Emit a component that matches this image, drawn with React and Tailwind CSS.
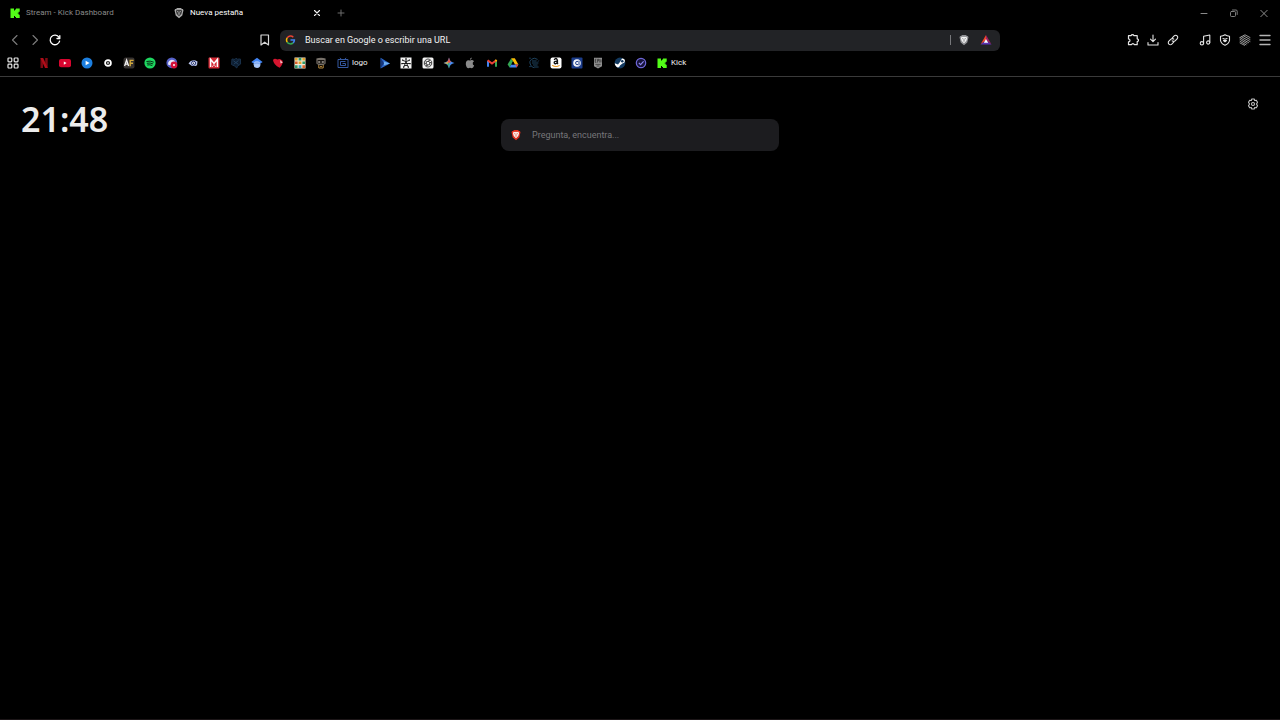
import { useState } from "react";

const KickIcon = () => (
  <svg viewBox="0 0 12 12" className="size-3 shrink-0">
    <path
      fill="#53fc18"
      d="M1.500 1.500h3.500v2h1v-1h1v-1h3.700v3.200h-1v1.100h-1v.8h1v1.100h1v3.300H7v-1H6v-1H5v2H1.500z"
    />
  </svg>
);

const LionIcon = ({ shield, face, line }) => (
  <svg viewBox="0 0 12 12" className="size-3 shrink-0">
    <path fill={shield} d="M4 1h4l.9.900h1l.6 1.400-.3 1.200-.9 3.900L6 11.200 2.700 8.400l-.9-3.900-.3-1.200.6-1.400h1z" />
    <path fill={face} d="M3.600 2.800l1.600.2.8-.2.8.2 1.600-.2.7 1.500L8.300 7 6 9.200 3.700 7l-.8-2.700z" />
    <path fill="none" stroke={line} strokeWidth=".6" d="M4 4.500l1.300.4M8 4.500l-1.300.4M6 4.700v1.800M5 7.300l1-.6 1 .6" />
  </svg>
);

// thin line icons of the toolbar
const LineIcon = ({ d, color = "#e4e4e4", width = 1.1, children }) => (
  <svg
    viewBox="0 0 12 12"
    className="size-3 shrink-0"
    fill="none"
    stroke={color}
    strokeWidth={width}
    strokeLinecap="round"
    strokeLinejoin="round"
  >
    {d && <path d={d} />}
    {children}
  </svg>
);

const IconButton = ({ label, children }) => (
  <button type="button" aria-label={label} className="flex shrink-0 items-center">
    {children}
  </button>
);

const firstLinks = [
  {
    name: "Netflix",
    icon: (
      <>
        <path fill="#7d0a13" d="M2.500 1h2.500v10H2.500zM7.200 1h2.500v10H7.200z" />
        <path fill="#b00d19" d="M2.500 1h2.700l4.500 10H7z" />
      </>
    ),
  },
  {
    name: "YouTube",
    icon: (
      <>
        <rect x="0" y="2" width="12" height="8.2" rx="2" fill="#d8052f" />
        <path fill="#fff" d="M4.800 4.500l2.800 1.600-2.800 1.600z" />
      </>
    ),
  },
  {
    name: "Video",
    icon: (
      <>
        <circle cx="6" cy="6" r="5.5" fill="#1c7fe0" />
        <path fill="#fff" d="M4.600 3.800L8.600 6 4.600 8.200z" />
      </>
    ),
  },
  {
    name: "Disco",
    icon: (
      <>
        <circle cx="6" cy="6" r="2.9" fill="none" stroke="#fff" strokeWidth="1.8" />
        <path stroke="#fff" strokeWidth="1.2" d="M6 4.8v2.4" />
      </>
    ),
  },
  {
    name: "AnimeFLV",
    icon: (
      <>
        <rect x=".5" y=".5" width="11" height="11" rx="2" fill="#35312f" />
        <path fill="none" stroke="#f2f2f2" strokeWidth="1.300" d="M1.600 9l2-6 2 6M2.300 7.200h2.600" />
        <path fill="none" stroke="#d2a93c" strokeWidth="1.400" d="M7.200 9.200V3.400h3.400M7.200 6.200h2.800" />
      </>
    ),
  },
  {
    name: "Spotify",
    icon: (
      <>
        <circle cx="6" cy="6" r="5.600" fill="#1ed760" />
        <path
          fill="none"
          stroke="#062b13"
          strokeLinecap="round"
          d="M2.800 4.400q3.400-1 6.600.6M3.200 6.200q3-.8 5.600.6M3.600 7.900q2.400-.6 4.400.5"
        />
      </>
    ),
  },
  {
    name: "Chat",
    icon: (
      <>
        <circle cx="5.800" cy="5.800" r="5.400" fill="#5661c9" />
        <path fill="#e6e6fb" d="M2 7.400q0-3.900 3.900-4.600 2.600 0 3.600 2.400L6.200 5l-1.600 3.400z" />
        <circle cx="8" cy="8" r="3.400" fill="#d3123b" />
        <circle cx="8" cy="8" r="1" fill="#fff" />
      </>
    ),
  },
  {
    name: "Ojo",
    icon: (
      <>
        <path fill="#b9c4ea" d="M1.500 6.400Q4.600 1.600 10.500 4.400L10 8.200Q6 10.600 1.500 6.400z" />
        <circle cx="6.600" cy="6.200" r="2" fill="#fff" stroke="#1c2b6b" />
        <circle cx="6.600" cy="6.200" r=".7" fill="#1c2b6b" />
      </>
    ),
  },
  {
    name: "Manga",
    icon: (
      <>
        <rect x=".5" y=".5" width="11" height="11" rx="1" fill="#d52a36" />
        <path fill="none" stroke="#fff" strokeWidth="1.500" d="M2.600 10V2.400L6 6.400l3.400-4V10" />
        <path stroke="#f7bdc0" d="M4.200 10L6 7.400 7.800 10" fill="none" />
      </>
    ),
  },
  {
    name: "Foro",
    icon: (
      <>
        <path
          fill="#0d1d30"
          stroke="#1a324c"
          d="M2 2l3 .4L6 1.200l1.200 1L10.400 2l.2 5L7.400 9.200 6.800 11 4.600 9 1.600 7.600z"
        />
        <path fill="none" stroke="#22405f" d="M3.400 3.800l5 3.600M8.400 3.600L3.800 7.200" />
      </>
    ),
  },
  {
    name: "Google Académico",
    icon: (
      <>
        <path fill="#4285f4" d="M6 .8L11.600 5 9 6.800H3L.4 5z" />
        <circle cx="6" cy="7.600" r="3.400" fill="#a9c7f8" />
        <path fill="#7faaf2" d="M3 6.200q3-2 6 0l-.3 1.200q-2.700-1.400-5.400 0z" />
      </>
    ),
  },
  {
    name: "Corazón",
    icon: (
      <>
        <path fill="#d5152f" d="M1 3Q2.400.8 5.400 2.600 8 1 10.600 3.800 11.400 7 7.600 10.800 1.600 8 1 3z" />
        <path fill="#f3c9cc" d="M8 3l2.800 2.600-2.200 1z" />
      </>
    ),
  },
  {
    name: "Mosaico",
    icon: (
      <>
        <rect x=".5" y=".5" width="11" height="11" fill="#f1ead2" />
        <path fill="#e3a32a" d="M1 1h2.600v2.400H1zM4.600 4.600h2.800V7H4.600zM8.400 1H11v2.400H8.400z" />
        <path fill="#2e9a68" d="M4.600 1h2.800v2.400H4.600zM1 8.200h2.600V11H1zM8.400 4.600H11V7H8.400z" />
        <path fill="#d9622b" d="M1 4.600h2.600V7H1zM8.400 8.200H11V11H8.400z" />
        <path fill="#39a9c4" d="M4.600 8.200h2.800V11H4.600z" />
      </>
    ),
  },
  {
    name: "Personaje",
    icon: (
      <>
        <path fill="#77716a" d="M1.400 1.600Q6-.2 10.600 1.600v5L8.600 8H3.400l-2-1.400z" />
        <path fill="#17130f" d="M2.600 3h6.800v3.600H2.600z" />
        <path fill="#e9e4dc" d="M3.200 4.400h2v1h-2zM6.800 4.400h2v1h-2z" />
        <path fill="none" stroke="#b98a3c" d="M3.800 8v3h4.400V8M5 9.400h2" />
      </>
    ),
  },
];

const secondLinks = [
  {
    name: "Play",
    icon: (
      <>
        <path fill="#2c67c9" d="M1.600.8L11 6.400 1.600 11.400z" />
        <path fill="#6fb0f2" d="M5 4.600l6 1.800L5 8.200z" />
        <path fill="#16357a" d="M1.600.8L5 6.200l-3.400 5.200z" />
      </>
    ),
  },
  {
    name: "Red",
    icon: (
      <>
        <rect x=".5" y=".5" width="11" height="11" fill="#f4f4f4" />
        <g fill="none" stroke="#111" strokeWidth=".9">
          <path d="M6 1.500v3M6 4.500L3 3.500M6 4.500l3-1M6 4.500L3.800 10M6 4.500L8.200 10M2 6.500h8M4.500 8.500h3" />
        </g>
        <path
          fill="#111"
          d="M5.400 1.200h1.200v1.200H5.400zM2 2.600h1.200v1.200H2zM8.800 2.600H10v1.200H8.800zM1.300 6h1.200v1.200H1.300zM9.500 6h1.200v1.200H9.500zM3 9.500h1.300v1.200H3zM7.700 9.500H9v1.200H7.700z"
        />
      </>
    ),
  },
  {
    name: "ChatGPT",
    icon: (
      <>
        <rect x=".5" y=".5" width="11" height="11" rx="1.500" fill="#f4f4f4" />
        <g fill="none" stroke="#222" strokeWidth=".8">
          <path d="M6 2q2 0 2.400 1.200Q10.200 4 9.700 6q.5 2-1.300 2.800Q8 10 6 10T3.600 8.800Q1.800 8 2.300 6q-.5-2 1.300-2.800Q4 2 6 2z" />
          <path d="M6 4.200l1.700 1v2L6 8.100l-1.700-.9v-2zM8.400 3.200L6 4.200M9.700 6L7.700 5.200M8.400 8.800l-.7-1.600M3.600 8.800L6 8.100M2.300 6l2 1.200M3.600 3.200l.7 2" />
        </g>
      </>
    ),
  },
  {
    name: "Gemini",
    icon: (
      <>
        <path fill="#4a8df0" d="M6 .5Q6.800 5.200 11.500 6 6.800 6.800 6 11.500 5.200 6.800.5 6 5.200 5.200 6 .5z" />
        <path fill="#e5533d" d="M6 .5q.4 3.600 2 4.600L6 6 4 5.100Q5.600 4.100 6 .5z" />
        <path fill="#e2b53b" d="M.5 6q3-.4 3.700-.9L6 6l-1.800.9Q3.500 6.400.5 6z" />
        <path fill="#3fae6c" d="M6 11.500Q5.600 8 4.200 6.900L6 6l.5 2z" />
      </>
    ),
  },
  {
    name: "Apple",
    icon: (
      <path
        fill="#8b8b8b"
        d="M6 3.600Q8.400 2.400 10 4.200 8.200 5.400 8.800 7.200q.3.900 1.400 1.400Q9.200 11.200 7.800 11.200L6 10.800l-1.600.4Q2.400 11.200 1.800 7.200 1.800 3.400 4.400 3.200zM5.900 3Q6 1 7.800.6 7.900 2.600 5.900 3z"
      />
    ),
  },
  {
    name: "Gmail",
    icon: (
      <g fill="none" strokeWidth="2">
        <path stroke="#4285f4" d="M2 4v5.800" />
        <path stroke="#34a853" d="M10 4v5.800" />
        <path stroke="#ea4335" d="M1.600 3.200L6 6.600l4.400-3.400" />
        <path stroke="#fbbc04" d="M9.400 4l1.200-1" />
      </g>
    ),
  },
  {
    name: "Drive",
    icon: (
      <>
        <path fill="#34a853" d="M4.200 1.200L6 4.200 2.600 10.400.6 7.600z" />
        <path fill="#fbbc04" d="M4.200 1.200h3.600l3.600 6.400H8z" />
        <path fill="#4285f4" d="M4.200 7.600h7.200l-1.800 2.800h-7z" />
        <path fill="#ea4335" d="M8.400 7.600h3l-1.800 2.800z" />
        <path fill="#000" d="M6 4.600l1.600 2.800H4.400z" />
      </>
    ),
  },
  {
    name: "Circuito",
    icon: (
      <g fill="none" stroke="#1f4460">
        <path d="M9.600 2.400Q6 0 3.400 2.400T2.200 7q.6 3 4 3.800M4 4h4.600M4 6h6.400M5 8h4.600M6 10h4.600" />
        <path stroke="#16324a" d="M1 1.200h2M9.600 4.600l1.600-1M1 9.600h2.600" />
      </g>
    ),
  },
  {
    name: "Amazon",
    icon: (
      <>
        <rect x=".5" y=".5" width="11" height="11" rx="2" fill="#fff" />
        <path
          fill="none"
          stroke="#111"
          strokeWidth="1.400"
          d="M4.200 3Q6 0 7.400 3.200V6.400l.6.600M7.300 4.200Q4 4 4.200 5.800 5.400 7.800 7.300 5.400"
        />
        <path fill="none" stroke="#f19a1a" strokeWidth="1.100" d="M2.200 8.200q3.800 2.600 7.400.2" />
      </>
    ),
  },
  {
    name: "Correo",
    icon: (
      <>
        <rect x=".5" y=".5" width="11" height="11" rx="1" fill="#1b3c8a" />
        <circle cx="6" cy="6" r="3.800" fill="#f2f5fc" />
        <path fill="none" stroke="#1b3c8a" d="M7 4.400Q4.600 3.800 4.600 6T7 7.600M8 3.600v4.800" />
      </>
    ),
  },
  {
    name: "Epic Games",
    icon: (
      <>
        <path fill="#8f8f8f" d="M2 .8h8v8.400L6 11.400 2 9.200z" />
        <path
          fill="none"
          stroke="#1c1c1c"
          strokeWidth=".6"
          d="M4.400 2.200H3.200v3.200h1.200M3.200 3.800h1M5.600 5.600V2.200h1v1.600h-1M7.800 2v3.600M9 2.400v3M3.400 7.400h5.200M4.600 9h2.800"
        />
      </>
    ),
  },
  {
    name: "Steam",
    icon: (
      <>
        <circle cx="6" cy="6" r="5.400" fill="#12395f" />
        <path fill="#fff" d="M.8 6.200L4 7.600 6 5l2-3.400q2.600-.2 3 2.200-.2 2.400-2.600 2.800L6 8.600Q5.600 10.600 3.800 10.400 2 9.800 1 7.800z" />
        <circle cx="8.300" cy="4.200" r="1.300" fill="#12395f" />
      </>
    ),
  },
  {
    name: "Verificado",
    icon: (
      <>
        <circle cx="6" cy="6" r="4.700" fill="#17143a" stroke="#6f67d8" strokeWidth="1.200" />
        <path fill="none" stroke="#8f88ee" strokeWidth="1.200" d="M3.800 5.800l1.800 1.800 3-3.200" />
      </>
    ),
  },
];

const Bookmark = ({ name, icon }) => (
  <a href="#" aria-label={name} className="flex">
    <svg viewBox="0 0 12 12" className="size-3">
      {icon}
    </svg>
  </a>
);

function TitleBar() {
  return (
    <div className="flex h-[26px] items-center justify-between pr-[10px] pl-[9px]">
      <div className="flex items-center">
        <button type="button" className="flex w-[164px] items-center gap-[5px] text-[#8a8a8a]">
          <KickIcon />
          <span>Stream - Kick Dashboard</span>
        </button>
        <button type="button" className="flex w-[138px] items-center gap-[5px] text-white">
          <LionIcon shield="#a9a9a9" face="#3b3b3b" line="#dedede" />
          <span>Nueva pestaña</span>
        </button>
        <div className="flex items-center gap-3">
          <IconButton label="Cerrar pestaña">
            <LineIcon d="M3.500 3.500l5 5M8.500 3.500l-5 5" color="#f2f2f2" />
          </IconButton>
          <IconButton label="Nueva pestaña">
            <LineIcon d="M6 3v6M3 6h6" color="#6c6c6c" width={1} />
          </IconButton>
        </div>
      </div>
      <div className="flex items-center gap-[18px]">
        <IconButton label="Minimizar">
          <LineIcon d="M3 6.500h6" color="#8a8a8a" width={1} />
        </IconButton>
        <IconButton label="Restaurar">
          <LineIcon color="#8a8a8a" width={0.9}>
            <rect x="2.500" y="4.500" width="5" height="5" rx="1" />
            <path d="M4.500 3h3.500q1.200 0 1.200 1.200V7.500" />
          </LineIcon>
        </IconButton>
        <IconButton label="Cerrar">
          <LineIcon d="M2.800 3.300l6.400 6.400M9.200 3.300L2.800 9.700" color="#9a9a9a" width={0.9} />
        </IconButton>
      </div>
    </div>
  );
}

function Toolbar() {
  const [url, setUrl] = useState("");

  return (
    <div className="grid h-7 grid-cols-[1fr_720px_1fr] items-center">
      <div className="flex items-center justify-between px-[9px]">
        <div className="flex items-center gap-2">
          <IconButton label="Atrás">
            <LineIcon d="M8 1.500L3.500 6 8 10.500" color="#7c7c7c" />
          </IconButton>
          <IconButton label="Adelante">
            <LineIcon d="M4 1.500L8.500 6 4 10.500" color="#7c7c7c" />
          </IconButton>
          <IconButton label="Recargar">
            <LineIcon width={1.3} color="#fff">
              <path d="M10.600 7.200A4.800 4.800 0 1 1 10 3.300" />
              <path d="M10.800 1.600v2.900H8" />
            </LineIcon>
          </IconButton>
        </div>
        <IconButton label="Guardar en marcadores">
          <LineIcon d="M2 1h7.500v10L5.700 8.200 2 11z" color="#d8d8d8" width={1.2} />
        </IconButton>
      </div>

      <div className="flex h-[21px] items-center rounded-md bg-[#222326] pr-2 pl-[5px]">
        <svg viewBox="0 0 12 12" className="size-3 shrink-0" fill="none" strokeWidth="1.500">
          <path stroke="#ea4335" d="M2.200 3.900A3.900 3.900 0 0 1 8.300 3.200" />
          <path stroke="#fbbc04" d="M2.200 8.100a3.900 3.900 0 0 1 0-4.200" />
          <path stroke="#34a853" d="M8.100 8.900A3.900 3.900 0 0 1 2.200 8.100" />
          <path stroke="#4285f4" d="M5.500 6h3.900A3.900 3.900 0 0 1 8.100 8.900" />
        </svg>
        <input
          type="text"
          aria-label="Barra de direcciones"
          placeholder="Buscar en Google o escribir una URL"
          value={url}
          onChange={(e) => setUrl(e.target.value)}
          className="ml-2 min-w-0 flex-1 bg-transparent text-[9px] text-white outline-none placeholder:text-[#f2f2f2]"
        />
        <span className="mr-[7px] h-2.5 w-px bg-[#77787b]" />
        <div className="flex items-center gap-[10px]">
          <IconButton label="Brave Shields">
            <LionIcon shield="#8f9094" face="#f4f4f4" line="#6d6d70" />
          </IconButton>
          <IconButton label="Brave Rewards">
            <svg viewBox="0 0 12 12" className="size-3">
              <path fill="#f0452a" d="M6 1L.5 10.500 6 6z" />
              <path fill="#9e1f63" d="M6 1l5.500 9.500L6 6z" />
              <path fill="#5b33b8" d="M.5 10.500h11L6 6.500z" />
              <path fill="#fff" d="M6 5l2.200 3.800H3.800z" />
            </svg>
          </IconButton>
        </div>
      </div>

      <div className="flex items-center justify-end gap-5 pr-[9px]">
        <div className="flex items-center gap-2">
          <IconButton label="Extensiones">
            <LineIcon
              width={1.2}
              d="M1.500 1.700h2.700q.2-1 1.300-1t1.300 1h3.400v3.100q1.300.2 1.300 1.400t-1.300 1.400v3.100H7.300Q7 9.600 5.900 9.600t-1.300 1.100H1.500V7.900q1.500-.2 1.500-1.500T1.500 4.900z"
            />
          </IconButton>
          <IconButton label="Descargas">
            <LineIcon d="M6 1v6.500M3.500 5.200L6 7.700l2.500-2.500M1 8.500V11h10V8.500" />
          </IconButton>
          <IconButton label="Copiar enlace">
            <LineIcon>
              <path d="M5.300 3.800l1.900-1.900a2 2 0 0 1 2.900 2.900L8.100 6.800a2 2 0 0 1-2.900 0" />
              <path d="M6.700 8.200L4.800 10.100a2 2 0 0 1-2.900-2.900L3.900 5.200a2 2 0 0 1 2.900 0" />
            </LineIcon>
          </IconButton>
        </div>
        <div className="flex items-center gap-2">
          <IconButton label="Música">
            <LineIcon>
              <path d="M4.600 9.200V2.200L10.800 1v7.200" />
              <circle cx="2.900" cy="9.300" r="1.700" />
              <circle cx="9.200" cy="8.500" r="1.600" />
            </LineIcon>
          </IconButton>
          <IconButton label="VPN">
            <LineIcon>
              <path d="M1.500 2.200Q4 2 6 .8 8 2 10.500 2.200v4.300Q10 9.600 6 11.300 2 9.600 1.500 6.500z" />
              <path d="M4 4.500l2 .7 2-.7M4.500 6.500L6 7.700l1.500-1.200z" />
            </LineIcon>
          </IconButton>
          <IconButton label="Leo">
            <LineIcon color="#a8a8a8" width={0.9}>
              <path d="M1 3.500L6 .8l5 2.700M1 5.400L8 9.500M1 7.300l6 3.400M2.600 2.800L11 7.500M4.400 1.800L11 5.500M1 9L5.600 11.300M1 3.700l8.600 5" />
            </LineIcon>
          </IconButton>
          <IconButton label="Menú">
            <LineIcon d="M1 1.500h10M1 6h10M1 10.500h10" color="#b4b4b4" width={1.4} />
          </IconButton>
        </div>
      </div>
    </div>
  );
}

function BookmarksBar() {
  return (
    <nav className="flex h-[23px] items-center border-b border-[#3a3a3a] pb-1 pl-[7px]">
      <IconButton label="Todos los marcadores">
        <LineIcon color="#e8e8e8" width={1.2}>
          <rect x="1" y="1" width="3.800" height="3.800" rx=".8" />
          <rect x="7.200" y="1" width="3.800" height="3.800" rx=".8" />
          <rect x="1" y="7.200" width="3.800" height="3.800" rx=".8" />
          <rect x="7.200" y="7.200" width="3.800" height="3.800" rx=".8" />
        </LineIcon>
      </IconButton>
      <div className="ml-[19px] flex w-[289px] justify-between">
        {firstLinks.map((link) => (
          <Bookmark key={link.name} {...link} />
        ))}
      </div>
      <a href="#" className="ml-[10px] flex w-[42px] items-center gap-[3px] text-[#f2f2f2]">
        <svg viewBox="0 0 12 12" className="size-3 shrink-0" fill="none" stroke="#3558a0">
          <path d="M4 2L3 .8M8 2L9 .8M1 2.500h10v8H1zM8.500 4.500h-5v4h5V6.500h-3" />
        </svg>
        <span>logo</span>
      </a>
      <div className="flex w-[268px] justify-between">
        {secondLinks.map((link) => (
          <Bookmark key={link.name} {...link} />
        ))}
      </div>
      <a href="#" className="ml-[9px] flex items-center gap-[3px] text-[#f2f2f2]">
        <KickIcon />
        <span>Kick</span>
      </a>
    </nav>
  );
}

export default function App() {
  const [query, setQuery] = useState("");

  return (
    <div className="flex min-h-screen flex-col border-b border-[#1c1618] bg-black font-[Roboto,'Noto_Sans',sans-serif] text-[8px] leading-3 text-white">
      <header>
        <TitleBar />
        <Toolbar />
        <BookmarksBar />
      </header>

      <main className="grid grid-cols-[1fr_278px_1fr] items-start pt-[21px]">
        <time className="pl-[21px] font-['Noto_Sans',sans-serif] text-[34px] leading-[42px] font-semibold text-[#ececec]">
          21:48
        </time>
        <div className="mt-[21px] flex h-8 items-center rounded-lg bg-[#1c1c1f] px-[9px]">
          <LionIcon shield="#e0301e" face="#fbeeea" line="#e0503c" />
          <input
            type="text"
            aria-label="Buscar"
            placeholder="Pregunta, encuentra..."
            value={query}
            onChange={(e) => setQuery(e.target.value)}
            className="ml-[10px] min-w-0 flex-1 bg-transparent text-[9px] text-white outline-none placeholder:text-[#77777a]"
          />
        </div>
        <div className="flex justify-end pr-[21px]">
          <IconButton label="Personalizar">
            <LineIcon color="#c4c4c4" width={1.1}>
              <path d="M4.800 1h2.400l.5 1.500 1.600-.3 1.200 2.100L9.500 6l1 1.700-1.200 2.100-1.600-.3L7.200 11H4.800l-.5-1.500-1.600.3-1.200-2.100L2.500 6l-1-1.700 1.200-2.100 1.600.3z" />
              <circle cx="6" cy="6" r="1.500" />
            </LineIcon>
          </IconButton>
        </div>
      </main>
    </div>
  );
}
